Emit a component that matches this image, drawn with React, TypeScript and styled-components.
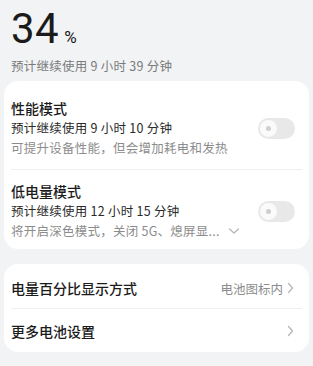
import React from "react";
import styled, { createGlobalStyle } from "styled-components";

const GlobalStyle = createGlobalStyle`
  html, body {
    margin: 0;
    padding: 0;
    background: #f1f3f5;
    font-family: "Noto Sans CJK SC", "Noto Sans", sans-serif;
    -webkit-font-smoothing: antialiased;
  }
`;

const Page = styled.div`
  width: 313px;
  height: 366px;
  overflow: hidden;
  background: #f1f3f5;
  padding: 0 4px;
  box-sizing: border-box;
`;

const Header = styled.div`
  padding: 0 7px;
  height: 81px;
  display: flex;
  flex-direction: column;
`;

const Level = styled.div`
  display: flex;
  align-items: baseline;
  margin-top: 4px;
  color: #1b1b1b;
`;

const Big = styled.span`
  font-family: "Roboto", "Noto Sans", sans-serif;
  font-size: 42px;
  line-height: 50px;
  font-weight: 400;
  letter-spacing: 0.5px;
`;

const Unit = styled.span`
  font-family: "Roboto", "Noto Sans", sans-serif;
  font-size: 17px;
  margin-left: 5px;
`;

const Estimate = styled.div`
  font-size: 12.5px;
  letter-spacing: 0.25px;
  line-height: 18px;
  color: #7a7a7a;
  margin-top: 3px;
`;

const Card = styled.div`
  background: #fff;
  border-radius: 14px;
  padding: 0 7px;
`;

const Gap = styled.div`
  height: 15px;
`;

const Mode = styled.div<{ $top: number; $bottom: number }>`
  display: flex;
  align-items: center;
  padding: ${(p) => p.$top}px 0 ${(p) => p.$bottom}px;
`;

const ModeText = styled.div`
  flex: 1;
  min-width: 0;
`;

const Title = styled.div`
  font-size: 14px;
  line-height: 20px;
  color: #1b1b1b;
  font-weight: 500;
`;

const Line = styled.div<{ $muted?: boolean }>`
  font-size: 12.5px;
  letter-spacing: 0.25px;
  line-height: 20px;
  color: ${(p) => (p.$muted ? "#8c8c8c" : "#2a2a2a")};
  display: flex;
  align-items: center;
  white-space: nowrap;
`;

const Divider = styled.div`
  height: 1px;
  background: #eeeff1;
`;

const Toggle = styled.div`
  width: 37px;
  height: 21px;
  border-radius: 11px;
  background: #e8e8e8;
  position: relative;
  margin-right: 7px;
  flex-shrink: 0;
`;

const Knob = styled.div`
  position: absolute;
  left: 2px;
  top: 2px;
  width: 17px;
  height: 17px;
  border-radius: 50%;
  background: #fafafa;
  display: flex;
  align-items: center;
  justify-content: center;
  &::after {
    content: "";
    width: 5px;
    height: 5px;
    border-radius: 50%;
    background: #cfcfcf;
  }
`;

const Row = styled.div<{ $h: number; $shift: number }>`
  height: ${(p) => p.$h}px;
  box-sizing: border-box;
  padding-top: ${(p) => p.$shift}px;
  display: flex;
  align-items: center;
  justify-content: space-between;
`;

const Value = styled.div`
  display: flex;
  align-items: center;
  gap: 4px;
  font-size: 12.5px;
  color: #8c8c8c;
  margin-right: 8px;
`;

const Chevron = ({ down }: { down?: boolean }) =>
  down ? (
    <svg width="12" height="8" viewBox="0 0 12 8" style={{ marginLeft: 8 }}>
      <path d="M1.5 2 L6 6 L10.5 2" fill="none" stroke="#b4b4b4" strokeWidth="1.2" strokeLinecap="round" strokeLinejoin="round" />
    </svg>
  ) : (
    <svg width="7" height="12" viewBox="0 0 7 12">
      <path d="M1.5 1.5 L5.5 6 L1.5 10.5" fill="none" stroke="#b4b4b4" strokeWidth="1.2" strokeLinecap="round" strokeLinejoin="round" />
    </svg>
  );

export default function App() {
  return (
    <Page>
      <GlobalStyle />
      <Header>
        <Level>
          <Big>34</Big>
          <Unit>%</Unit>
        </Level>
        <Estimate>预计继续使用 9 小时 39 分钟</Estimate>
      </Header>
      <Card>
        <Mode $top={17} $bottom={11}>
          <ModeText>
            <Title>性能模式</Title>
            <Line>预计继续使用 9 小时 10 分钟</Line>
            <Line $muted>可提升设备性能，但会增加耗电和发热</Line>
          </ModeText>
          <Toggle>
            <Knob />
          </Toggle>
        </Mode>
        <Divider />
        <Mode $top={11} $bottom={8}>
          <ModeText>
            <Title>低电量模式</Title>
            <Line>预计继续使用 12 小时 15 分钟</Line>
            <Line $muted>
              将开启深色模式，关闭 5G、熄屏显...
              <Chevron down />
            </Line>
          </ModeText>
          <Toggle>
            <Knob />
          </Toggle>
        </Mode>
      </Card>
      <Gap />
      <Card>
        <Row $h={44} $shift={4}>
          <Title>电量百分比显示方式</Title>
          <Value>
            电池图标内
            <Chevron />
          </Value>
        </Row>
        <Divider />
        <Row $h={43} $shift={1}>
          <Title>更多电池设置</Title>
          <Value>
            <Chevron />
          </Value>
        </Row>
      </Card>
    </Page>
  );
}
